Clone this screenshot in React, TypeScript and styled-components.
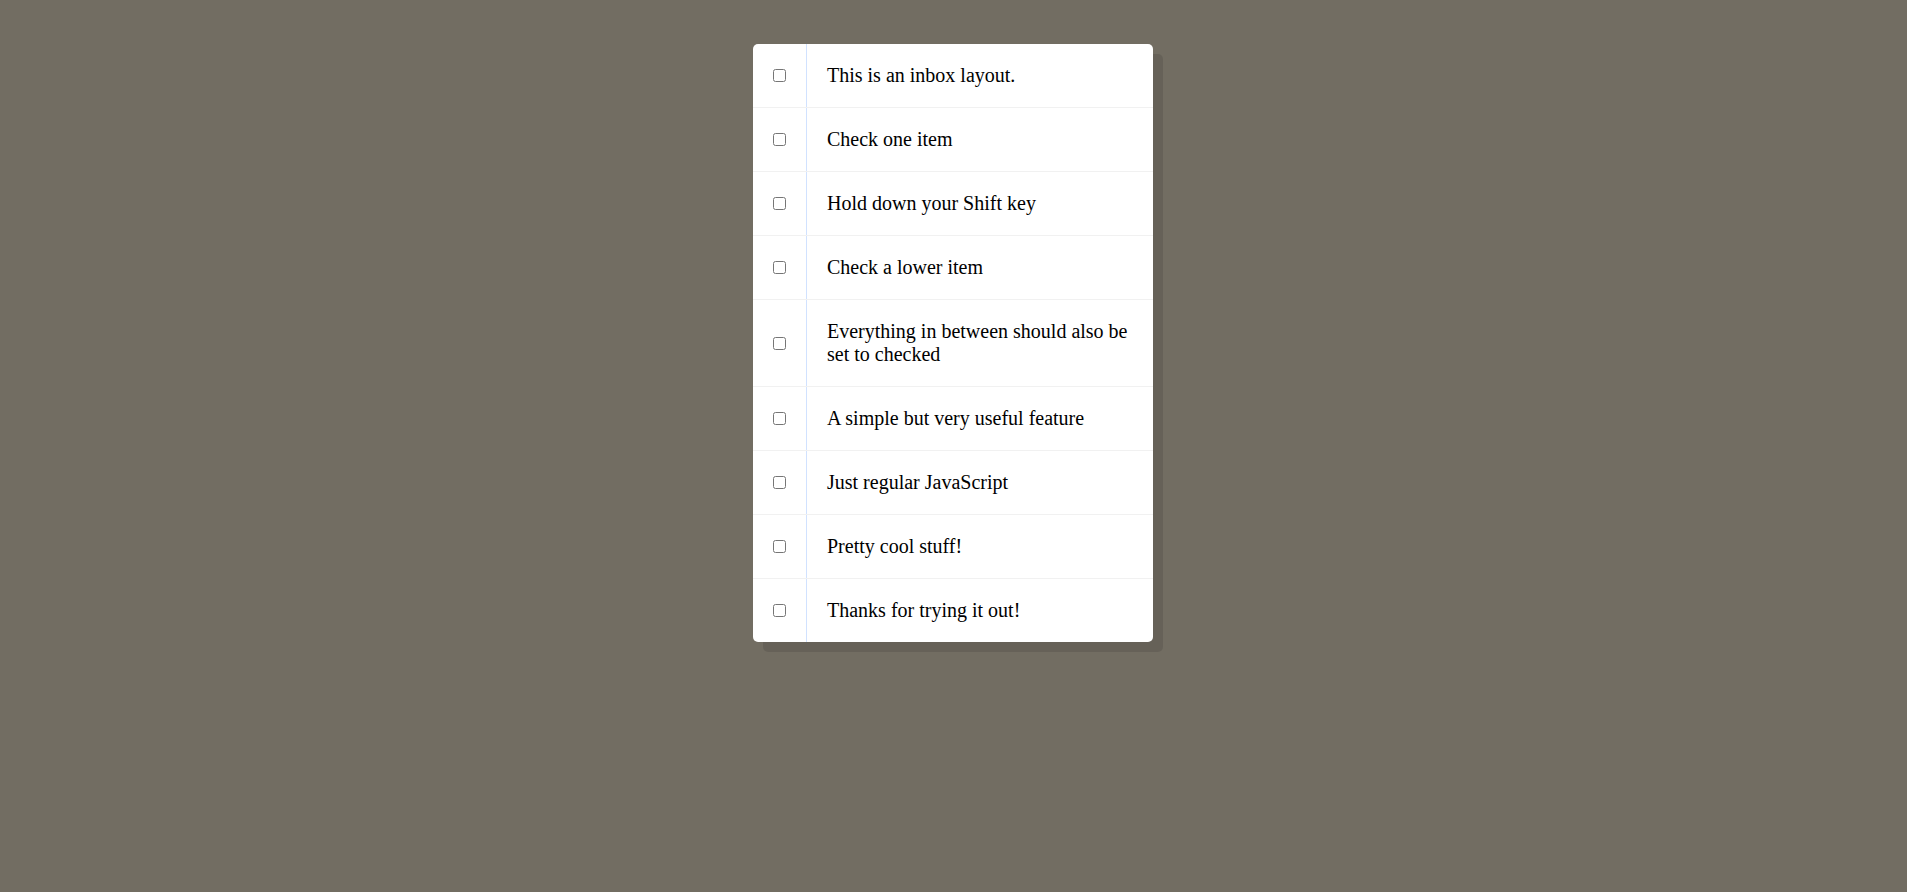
import React from "react";
import styled, { createGlobalStyle } from "styled-components";

const Global = createGlobalStyle`
  html, body { margin: 0; padding: 0; background: #726d62; }
  body { font-family: "Liberation Serif", "Times New Roman", serif; }
`;

const Page = styled.div`
  padding: 44px 1px 60px 0;
`;

const Inbox = styled.div`
  width: 400px;
  margin: 0 auto;
  background: #ffffff;
  border-radius: 5px;
  box-shadow: 10px 10px 0 rgba(0, 0, 0, 0.1);
`;

const Item = styled.div`
  display: flex;
  align-items: center;
  border-bottom: 1px solid #f1f1f1;
  &:last-child { border-bottom: 0; }
`;

const Box = styled.input`
  margin: 20px;
  width: 13px;
  height: 13px;
  &:checked + p {
    background: #f9f9f9;
    text-decoration: line-through;
  }
`;

const Text = styled.p`
  margin: 0;
  padding: 20px;
  flex: 1;
  font-family: "Liberation Serif", "Times New Roman", serif;
  font-size: 20px;
  font-weight: 200;
  color: #000;
  border-left: 1px solid #d1e2ff;
`;

const items = [
  "This is an inbox layout.",
  "Check one item",
  "Hold down your Shift key",
  "Check a lower item",
  "Everything in between should also be set to checked",
  "A simple but very useful feature",
  "Just regular JavaScript",
  "Pretty cool stuff!",
  "Thanks for trying it out!",
];

export default function App() {
  const [checked, setChecked] = React.useState<boolean[]>(items.map(() => false));
  const last = React.useRef<number | null>(null);
  const onClick = (i: number, e: React.MouseEvent<HTMLInputElement>) => {
    const val = (e.target as HTMLInputElement).checked;
    setChecked((prev) => {
      const next = [...prev];
      next[i] = val;
      if (e.shiftKey && val && last.current !== null) {
        const [a, b] = [Math.min(i, last.current), Math.max(i, last.current)];
        for (let k = a; k <= b; k++) next[k] = true;
      }
      return next;
    });
    last.current = i;
  };
  return (
    <>
      <Global />
      <Page>
        <Inbox>
          {items.map((t, i) => (
            <Item key={i}>
              <Box
                type="checkbox"
                checked={checked[i]}
                onChange={() => {}}
                onClick={(e) => onClick(i, e)}
              />
              <Text>{t}</Text>
            </Item>
          ))}
        </Inbox>
      </Page>
    </>
  );
}
